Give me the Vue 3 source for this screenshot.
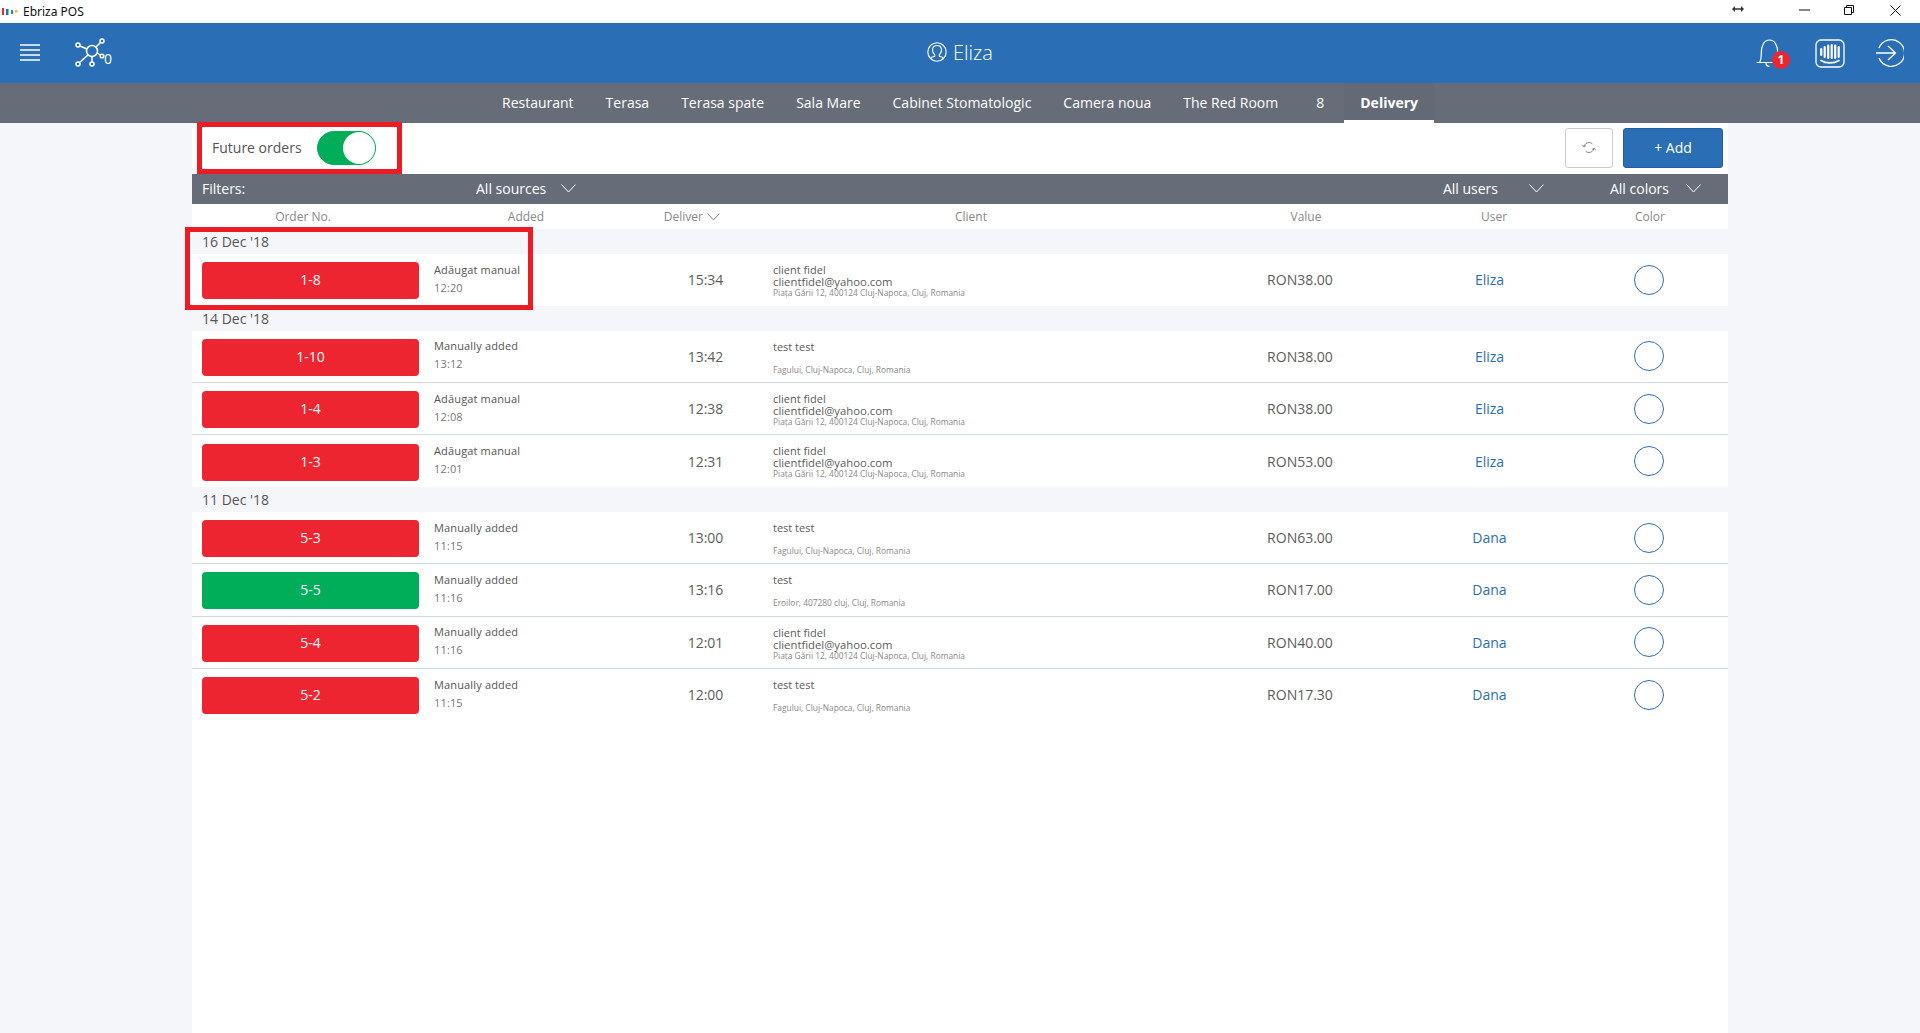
<script setup>
const tabs = ['Restaurant', 'Terasa', 'Terasa spate', 'Sala Mare', 'Cabinet Stomatologic', 'Camera noua', 'The Red Room', '8']
const fidel = { name: 'client fidel', email: 'clientfidel@yahoo.com', addr: 'Piața Gării 12, 400124 Cluj-Napoca, Cluj, Romania' }
const testc = { name: 'test test', email: '', addr: 'Fagului, Cluj-Napoca, Cluj, Romania' }
const groups = [
  { date: "16 Dec '18", rows: [
    { no: '1-8', src: 'Adăugat manual', at: '12:20', time: '15:34', c: fidel, val: 'RON38.00', user: 'Eliza' },
  ]},
  { date: "14 Dec '18", rows: [
    { no: '1-10', src: 'Manually added', at: '13:12', time: '13:42', c: testc, val: 'RON38.00', user: 'Eliza' },
    { no: '1-4', src: 'Adăugat manual', at: '12:08', time: '12:38', c: fidel, val: 'RON38.00', user: 'Eliza' },
    { no: '1-3', src: 'Adăugat manual', at: '12:01', time: '12:31', c: fidel, val: 'RON53.00', user: 'Eliza' },
  ]},
  { date: "11 Dec '18", rows: [
    { no: '5-3', src: 'Manually added', at: '11:15', time: '13:00', c: testc, val: 'RON63.00', user: 'Dana' },
    { no: '5-5', green: true, src: 'Manually added', at: '11:16', time: '13:16', c: { name: 'test', email: '', addr: 'Eroilor, 407280 cluj, Cluj, Romania' }, val: 'RON17.00', user: 'Dana' },
    { no: '5-4', src: 'Manually added', at: '11:16', time: '12:01', c: fidel, val: 'RON40.00', user: 'Dana' },
    { no: '5-2', src: 'Manually added', at: '11:15', time: '12:00', c: testc, val: 'RON17.30', user: 'Dana' },
  ]},
]
</script>

<template>
  <div class="app">
    <div class="titlebar">
      <div class="title-left">
        <svg class="winlogo" width="18" height="8" viewBox="0 0 18 8">
          <rect x="2" y="0" width="2" height="7" fill="#ed2530" />
          <rect x="6" y="1" width="2.500" height="6" fill="#2a6fb5" />
          <rect x="11" y="2" width="2" height="4" fill="#00ad58" />
          <rect x="15" y="2" width="2.500" height="2.500" fill="#f5b82e" />
        </svg>
        <span>Ebriza POS</span>
      </div>
      <div class="winctl">
        <svg class="w-resize" width="12" height="8" viewBox="0 0 12 8"><path d="M0 4l3-3v6zM12 4L9 1v6zM3 3.300h6v1.400H3z" fill="#333" /></svg>
        <svg class="w-min" width="11" height="2" viewBox="0 0 11 2"><path d="M0 1h11" stroke="#111" stroke-width="1" /></svg>
        <svg class="w-max" width="10" height="10" viewBox="0 0 10 10" fill="none" stroke="#111"><path d="M.5 2.500h7v7h-7zM2.500 2.500v-2h7v7h-2" /></svg>
        <svg class="w-close" width="11" height="11" viewBox="0 0 11 11" stroke="#111"><path d="M.5.5l10 10M10.500.5l-10 10" /></svg>
      </div>
    </div>

    <header class="topbar">
      <div class="top-left">
        <svg class="burger" width="20" height="17" viewBox="0 0 20 17" stroke="#fff" stroke-width="1.300"><path d="M0 1h20M0 6h20M0 11h20M0 16h20" /></svg>
        <div class="network">
          <svg width="30" height="30" viewBox="0 0 30 30" fill="none" stroke="#fff" stroke-width="1.500">
            <circle cx="17" cy="13" r="5.500" />
            <circle cx="3" cy="7" r="2" />
            <circle cx="27" cy="3" r="2" />
            <circle cx="27" cy="18" r="1.800" />
            <circle cx="3" cy="26" r="2" />
            <circle cx="17" cy="26" r="2" />
            <path d="M5 8l7 3M21 9l4.500-4.500M22.300 15l3 2M13 17L4.500 24.500M17 18.500V24" />
          </svg>
          <span>0</span>
        </div>
      </div>
      <div class="who">
        <svg width="20" height="20" viewBox="0 0 20 20" fill="none" stroke="#fff" stroke-width="1.100">
          <circle cx="10" cy="10" r="9.200" />
          <path d="M3.500 16.500c.8-1.200 2.500-1.600 4.200-2.300v-1.400C6.200 11.600 5.500 10 5.500 8 5.500 5.200 7.300 3.500 10 3.500s4.500 1.700 4.500 4.500c0 2-.7 3.600-2.200 4.800v1.400c1.700.7 3.400 1.100 4.200 2.300" />
        </svg>
        <span>Eliza</span>
      </div>
      <div class="top-right">
        <div class="bell">
          <svg width="27" height="28" viewBox="0 0 27 28" fill="none" stroke="#fff" stroke-width="1.200">
            <path d="M.5 23.500h20M3.500 23.500c1.400-2 1.800-5 1.800-9.500C5.300 6 8.500 1 13.500 1s8.200 5 8.200 13v6" />
            <path d="M10 24c0 2 1.500 3.300 3.500 3.300" />
          </svg>
          <span class="badge">1</span>
        </div>
        <svg class="chat" width="30" height="29" viewBox="0 0 30 29" fill="none" stroke="#fff">
          <rect x="1" y="1" width="28" height="27" rx="5" stroke-width="1.300" />
          <path d="M6 10v6M9.500 8v10M13 6.500v12.500M16.500 6v13M20 6.500v12.500M23.500 8v10" stroke-width="2.200" stroke-linecap="round" transform="translate(.2 0)" />
          <path d="M6 21.500c5 3.200 13 3.200 18 0" stroke-width="1.600" stroke-linecap="round" />
        </svg>
        <svg class="logout" width="28" height="28" viewBox="0 0 28 28" fill="none" stroke="#fff" stroke-width="1.300">
          <path d="M3 9A13.300 13.300 0 1 1 3 19M0 14h19.500M12 7l7.500 7-7.500 7" />
        </svg>
      </div>
    </header>

    <nav class="tabs">
      <a v-for="t in tabs" :key="t" class="tab" :class="{ short: t === '8' }">{{ t }}</a>
      <a class="tab active">Delivery</a>
    </nav>

    <main class="sheet">
      <div class="tools">
        <div class="future">
          <span>Future orders</span>
          <span class="toggle"><i></i></span>
        </div>
        <div class="tool-btns">
          <button class="refresh">
            <svg width="14" height="13" viewBox="0 0 14 13" fill="none" stroke="#8a8a8a" stroke-width="1"><path d="M2 5.500C2.700 3 4.700 1.500 7 1.500c1.500 0 2.800.7 3.700 1.800M12 7.500c-.7 2.500-2.700 4-5 4-1.500 0-2.800-.7-3.700-1.800M.5 4l1.500 2 2-1.500M13.500 9L12 7l-2 1.500" /></svg>
          </button>
          <button class="add">+ Add</button>
        </div>
      </div>

      <div class="filters">
        <span class="f-label">Filters:</span>
        <span class="f-sel f-sources">All sources
          <svg width="15" height="9" viewBox="0 0 15 9" fill="none" stroke="#fff"><path d="M.5.500l7 7.500 7-7.500" /></svg>
        </span>
        <span class="f-sel f-users">All users
          <svg width="15" height="9" viewBox="0 0 15 9" fill="none" stroke="#fff"><path d="M.5.500l7 7.500 7-7.500" /></svg>
        </span>
        <span class="f-sel f-colors">All colors
          <svg width="15" height="9" viewBox="0 0 15 9" fill="none" stroke="#fff"><path d="M.5.500l7 7.500 7-7.500" /></svg>
        </span>
      </div>

      <div class="heads">
        <span>Order No.</span>
        <span>Added</span>
        <span class="h-deliver">Deliver
          <svg width="13" height="8" viewBox="0 0 13 8" fill="none" stroke="#888"><path d="M.5.500l6 6.500 6-6.500" /></svg>
        </span>
        <span>Client</span>
        <span>Value</span>
        <span>User</span>
        <span>Color</span>
      </div>

      <section v-for="g in groups" :key="g.date">
        <div class="date">{{ g.date }}</div>
        <div v-for="r in g.rows" :key="r.no" class="row">
          <div class="no-cell"><div class="no" :class="{ green: r.green }">{{ r.no }}</div></div>
          <div class="added">
            <div class="src">{{ r.src }}</div>
            <div class="at">{{ r.at }}</div>
          </div>
          <div class="time">{{ r.time }}</div>
          <div class="client">
            <div class="c-name">{{ r.c.name }}</div>
            <div class="c-mail">{{ r.c.email }}</div>
            <div class="c-addr">{{ r.c.addr }}</div>
          </div>
          <div class="val">{{ r.val }}</div>
          <a class="user">{{ r.user }}</a>
          <div class="dot-cell"><span class="dot"></span></div>
        </div>
      </section>
    </main>

    <div class="mark mark-a"></div>
    <div class="mark mark-b"></div>
  </div>
</template>

<style>
html, body { margin: 0; background: #f5f6fa; overflow: hidden; }
</style>

<style scoped>
.app {
  position: relative;
  width: 1920px;
  height: 1033px;
  overflow: hidden;
  display: flex;
  flex-direction: column;
  background: #f5f6fa;
  font-family: "Open Sans", "Noto Sans", sans-serif;
  color: #555;
}
.titlebar {
  height: 23px;
  flex: none;
  background: #fff;
  display: flex;
  justify-content: space-between;
  align-items: center;
}
.title-left {
  display: flex;
  align-items: center;
  gap: 5px;
  font: 12px "Noto Sans", sans-serif;
  color: #111;
}
.winctl { position: relative; width: 200px; height: 23px; }
.winctl svg { position: absolute; }
.w-resize { left: 12px; top: 5px; }
.w-min { left: 79px; top: 9px; }
.w-max { left: 124px; top: 5px; }
.w-close { left: 170px; top: 5px; }

.topbar {
  height: 60px;
  flex: none;
  background: #2a6fb5;
  display: grid;
  grid-template-columns: 1fr auto 1fr;
  align-items: center;
  color: #fff;
}
.top-left { display: flex; align-items: center; padding-left: 20px; gap: 35px; }
.burger { display: block; margin-top: -2px; }
.network { position: relative; width: 37px; height: 30px; }
.network svg { display: block; }
.network span { position: absolute; left: 29px; top: 14px; font-size: 14px; line-height: 13px; }
.who { display: flex; align-items: center; gap: 6px; font-size: 20px; font-weight: 300; padding-bottom: 2px; }
.top-right { display: flex; justify-content: flex-end; align-items: center; padding-right: 16px; }
.bell { position: relative; width: 27px; height: 28px; margin-right: 32px; }
.bell svg { display: block; }
.badge {
  position: absolute;
  left: 16px;
  top: 12px;
  width: 18px;
  height: 18px;
  border-radius: 50%;
  background: #ed2530;
  color: #fff;
  font-size: 12px;
  font-weight: 700;
  line-height: 18px;
  text-align: center;
}
.chat { margin-right: 31px; }

.tabs {
  height: 40px;
  flex: none;
  background: #666d79;
  display: flex;
  justify-content: center;
  box-sizing: border-box;
}
.tab {
  padding: 0 16px;
  line-height: 40px;
  font-size: 14px;
  color: #fff;
  box-sizing: border-box;
}
.tab.short { padding: 0 20px 0 22px; }
.tab.active { font-weight: 700; border-bottom: 3px solid #fff; height: 40px; background: #636a76; }

.sheet {
  width: 1536px;
  margin-left: 192px;
  flex: 1;
  background: #fff;
}
.tools {
  height: 51px;
  box-sizing: border-box;
  display: flex;
  justify-content: space-between;
  align-items: center;
  padding: 0 5px 2px 20px;
}
.future { display: flex; align-items: center; gap: 15px; font-size: 14px; color: #555; }
.toggle {
  width: 59px;
  height: 34px;
  box-sizing: border-box;
  border-radius: 17px;
  background: #00ad58;
  display: flex;
  justify-content: flex-end;
  border: 1px solid #00ad58;
}
.toggle i { width: 32px; height: 32px; border-radius: 50%; background: #fff; display: block; }
.tool-btns { display: flex; gap: 10px; }
.refresh {
  width: 48px;
  height: 40px;
  padding: 0;
  background: #fff;
  border: 1px solid #ccc;
  border-radius: 3px;
  display: flex;
  align-items: center;
  justify-content: center;
}
.add {
  width: 100px;
  height: 40px;
  background: #2a6fb5;
  border: 1px solid #235f9e;
  border-radius: 3px;
  color: #fff;
  font: 14px "Open Sans", sans-serif;
}

.filters {
  height: 30px;
  box-sizing: border-box;
  background: #666d79;
  color: #fff;
  font-size: 14px;
  display: grid;
  grid-template-columns: 274px 1fr auto auto;
  align-items: center;
  padding: 0 27px 2px 10px;
}
.f-sel { display: flex; align-items: center; }
.f-sel svg { display: block; }
.f-sources svg { margin-left: 15px; }
.f-users { margin-right: 66px; }
.f-users svg { margin-left: 31px; }
.f-colors svg { margin-left: 17px; }

.heads {
  height: 25px;
  display: grid;
  grid-template-columns: 222px 224px 108px 450px 220px 156px 156px;
  align-items: center;
  text-align: center;
  font-size: 12px;
  color: #888;
}
.h-deliver svg { margin-left: 1px; }

.date {
  height: 25px;
  background: #f5f6fa;
  padding-left: 10px;
  font-size: 14px;
  line-height: 25px;
  color: #555;
}
.row {
  height: 52.33px;
  box-sizing: border-box;
  display: grid;
  grid-template-columns: 242px 226px 90px 22px 468px 120px 258px 62px;
  align-items: center;
  border-bottom: 1px solid #d0dbe3;
}
section .row:last-child { border-bottom: none; height: 51.67px; }
.no-cell { padding: 2px 0 0 10px; }
.no {
  width: 217px;
  height: 37px;
  border-radius: 4px;
  background: #ed2530;
  color: #fff;
  font-size: 14px;
  font-weight: 500;
  line-height: 35px;
  text-align: center;
}
.no.green { background: #00ad58; }
.added { font-size: 11px; line-height: 18px; letter-spacing: .15px; margin-top: -2px; }
.src { color: #555; }
.at { color: #777; }
.time { font-size: 14px; text-align: center; color: #5c5c5c; padding-left: 1px; }
.client { grid-column: 5; align-self: start; padding: 10px 0 0 1px; color: #5c5c5c; }
.c-name { font-size: 11px; line-height: 12px; }
.c-mail { font-size: 11.300px; line-height: 12px; min-height: 12px; }
.c-addr { font-size: 8.400px; line-height: 9px; color: #888; }
.val { font-size: 14px; text-align: center; color: #5c5c5c; }
.user { font-size: 14px; text-align: center; color: #2a6fb5; padding-left: 1px; }
.dot-cell { display: flex; justify-content: center; }
.dot {
  width: 30px;
  height: 30px;
  box-sizing: border-box;
  border-radius: 50%;
  border: 1.500px solid #2a6fb5;
  background: #fff;
}

.mark { position: absolute; border: 5px solid #ed1c24; box-sizing: border-box; pointer-events: none; }
.mark-a { left: 197px; top: 122px; width: 205px; height: 52px; }
.mark-b { left: 185px; top: 227px; width: 348px; height: 83px; }
</style>
